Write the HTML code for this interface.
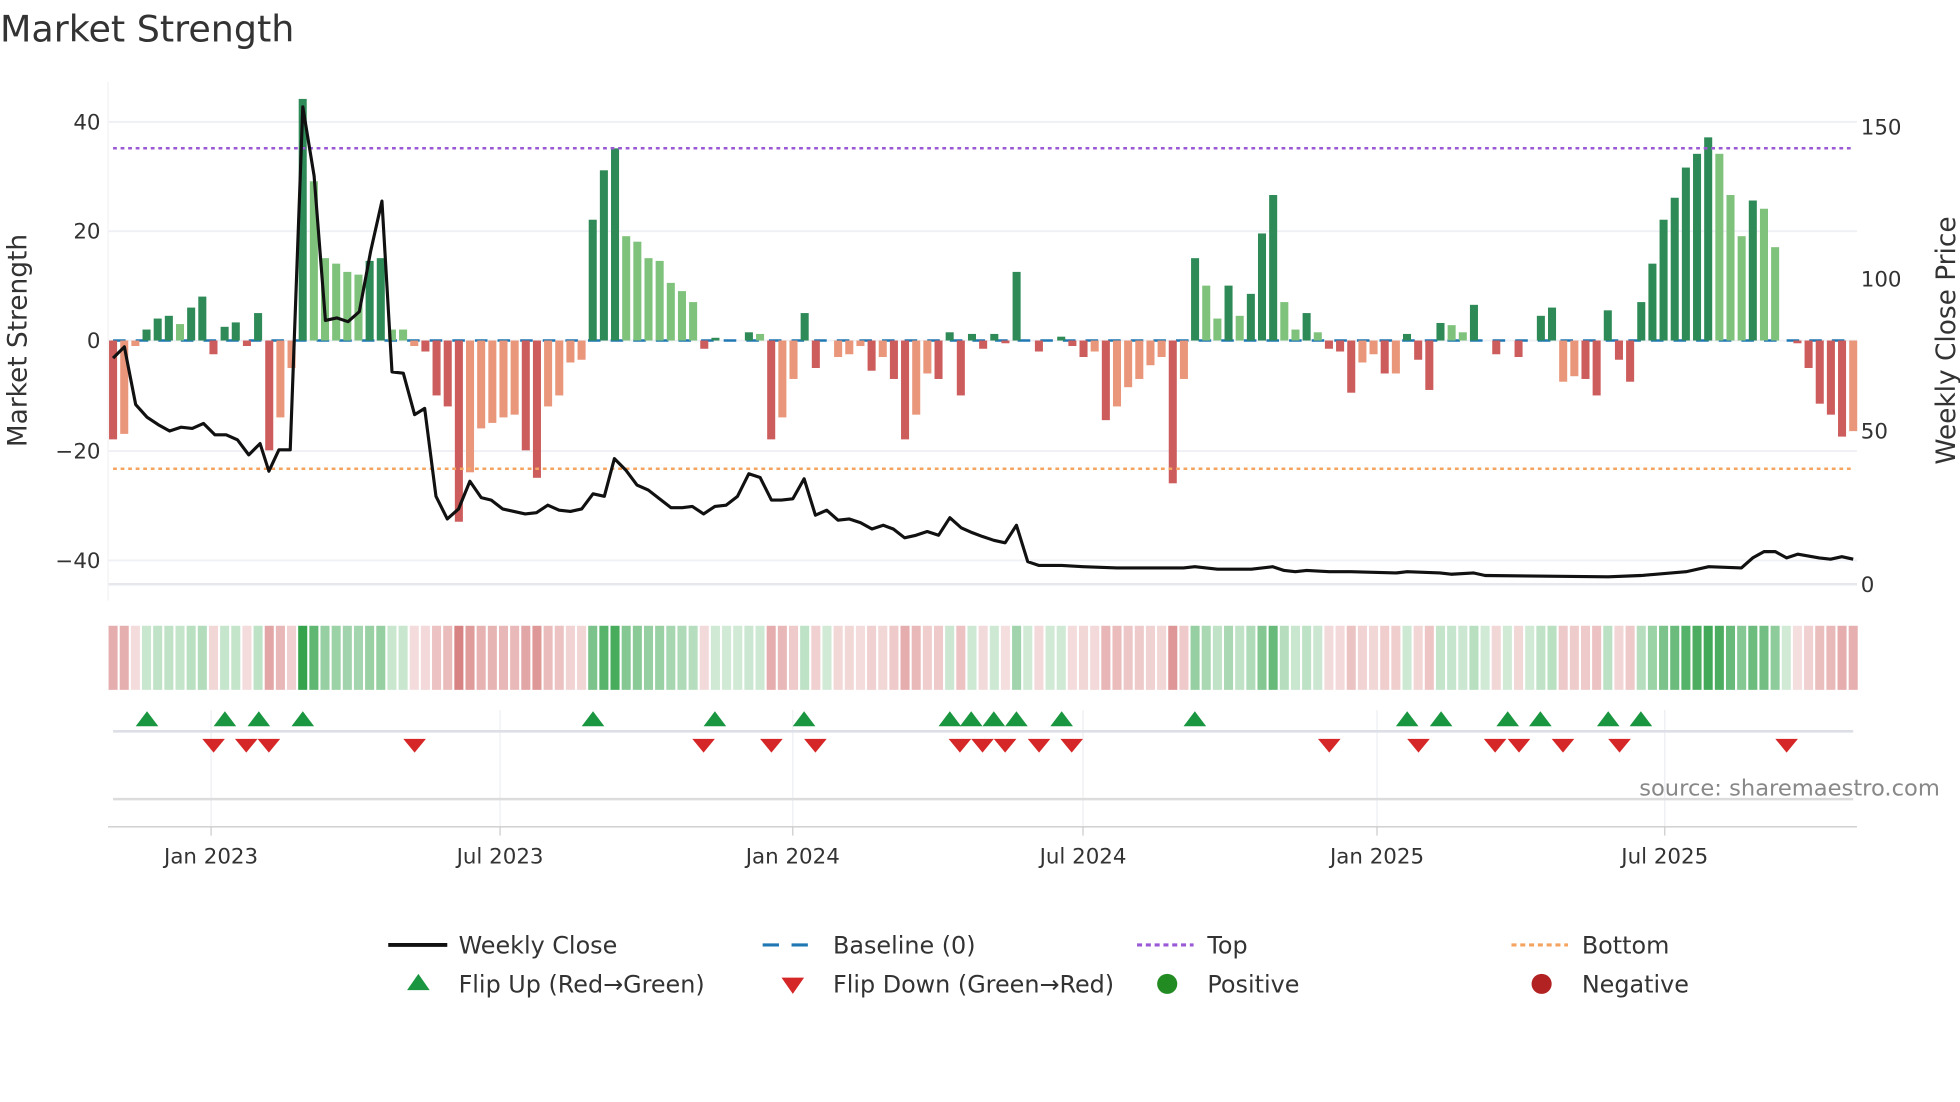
<!DOCTYPE html>
<html><head><meta charset="utf-8">
<style>
html,body{margin:0;padding:0;background:#fff;}
svg{display:block;}
text{font-family:"DejaVu Sans","Liberation Sans",sans-serif;fill:#333;}
</style></head>
<body>
<svg id="s" width="1960" height="1102" viewBox="0 0 1560 877" preserveAspectRatio="none" xmlns="http://www.w3.org/2000/svg">
<rect width="1560" height="877" fill="#fff"/>
<text x="0" y="33" font-size="29">Market Strength</text>
<g id="grid"></g>
<g id="bars"></g>
<g id="lines"></g>
<g id="strip"></g>
<g id="marks"></g>
<g font-size="17" text-anchor="end">
<text x="80" y="103">40</text>
<text x="80" y="190">20</text>
<text x="80" y="277">0</text>
<text x="80" y="365">−20</text>
<text x="80" y="452">−40</text>
</g>
<g font-size="17" text-anchor="start">
<text x="1481" y="107">150</text>
<text x="1481" y="228">100</text>
<text x="1481" y="349">50</text>
<text x="1481" y="471">0</text>
</g>
<text transform="translate(21,271) rotate(-90)" font-size="21" text-anchor="middle">Market Strength</text>
<text transform="translate(1556,271) rotate(-90)" font-size="21" text-anchor="middle">Weekly Close Price</text>
<text x="1544" y="633" font-size="18" text-anchor="end" style="fill:#888">source: sharemaestro.com</text>
<g font-size="17" text-anchor="middle">
<text x="168" y="687">Jan 2023</text>
<text x="398" y="687">Jul 2023</text>
<text x="631" y="687">Jan 2024</text>
<text x="862" y="687">Jul 2024</text>
<text x="1096" y="687">Jan 2025</text>
<text x="1325" y="687">Jul 2025</text>
</g>
<g font-size="19">
<line x1="309" y1="752" x2="356" y2="752" stroke="#111" stroke-width="3"/>
<text x="365" y="759">Weekly Close</text>
<line x1="607" y1="752" x2="652" y2="752" stroke="#1f77b4" stroke-width="2.5" stroke-dasharray="13,10"/>
<text x="663" y="759">Baseline (0)</text>
<line x1="905" y1="752" x2="950" y2="752" stroke="#9b59d6" stroke-width="2.5" stroke-dasharray="4,3"/>
<text x="961" y="759">Top</text>
<line x1="1203" y1="752" x2="1248" y2="752" stroke="#f4a460" stroke-width="2.5" stroke-dasharray="4,3"/>
<text x="1259" y="759">Bottom</text>
<polygon points="324,788 342,788 333,775" fill="#1a9641"/>
<text x="365" y="790">Flip Up (Red→Green)</text>
<polygon points="622,778 640,778 631,791" fill="#d62728"/>
<text x="663" y="790">Flip Down (Green→Red)</text>
<circle cx="929" cy="783" r="8" fill="#228b22"/>
<text x="961" y="790">Positive</text>
<circle cx="1227" cy="783" r="8" fill="#b22222"/>
<text x="1259" y="790">Negative</text>
</g>
</svg>
<script>
var NS="http://www.w3.org/2000/svg";
function el(p,t,a){var e=document.createElementNS(NS,t);for(var k in a)e.setAttribute(k,a[k]);document.getElementById(p).appendChild(e);return e;}
[97,184,271,359,446].forEach(function(y){el("grid","line",{x1:86,x2:1478,y1:y,y2:y,stroke:"#eef0f5","stroke-width":1.5});});
el("grid","line",{x1:86,x2:1478,y1:465,y2:465,stroke:"#e6e8ee","stroke-width":2});
el("grid","line",{x1:86,x2:86,y1:65,y2:478,stroke:"#f2f2f2","stroke-width":1});
[168,398,631,862,1096,1325].forEach(function(x){
 el("grid","line",{x1:x,x2:x,y1:565,y2:658,stroke:"#eceef2","stroke-width":1});
 el("grid","line",{x1:x,x2:x,y1:658,y2:665,stroke:"#ccc","stroke-width":1});
});
el("grid","line",{x1:90,x2:1475,y1:582,y2:582,stroke:"#dcdfe6","stroke-width":2});
el("grid","line",{x1:90,x2:1475,y1:636,y2:636,stroke:"#dcdcdc","stroke-width":2});
el("grid","line",{x1:86,x2:1478,y1:658,y2:658,stroke:"#ccc","stroke-width":1});
el("grid","line",{x1:90,x2:1475,y1:271,y2:271,stroke:"#1f77b4","stroke-width":2,"stroke-dasharray":"10,8"});
var v=[-18,1,-17,0,-1,0,2,1,4,1,4.5,1,3,0,6,1,8,1,-2.5,1,2.5,1,3.3,1,-1,1,5,1,-20,1,-14,0,-5,0,44,1,29,0,15,0,14,0,12.5,0,12,0,14.5,1,15,1,2,0,2,0,-1,0,-2,1,-10,1,-12,1,-33,1,-24,0,-16,0,-15,0,-14,0,-13.5,0,-20,1,-25,1,-12,0,-10,0,-4,0,-3.5,0,22,1,31,1,35,1,19,0,18,0,15,0,14.5,0,10.5,0,9,0,7,0,-1.5,1,0.5,1,0,0,0,0,1.5,1,1.2,0,-18,1,-14,0,-7,0,5,1,-5,1,0,0,-3,0,-2.5,0,-1,0,-5.5,1,-3,0,-7,1,-18,1,-13.5,0,-6,0,-7,1,1.5,1,-10,1,1.2,1,-1.5,1,1.2,1,-0.5,1,12.5,1,0,0,-2,1,0,0,0.7,1,-1,1,-3,1,-2,0,-14.5,1,-12,0,-8.5,0,-7,0,-4.5,0,-3,0,-26,1,-7,0,15,1,10,0,4,0,10,1,4.5,0,8.5,1,19.5,1,26.5,1,7,0,2,0,5,1,1.5,0,-1.5,1,-2,1,-9.5,1,-4,0,-2.5,0,-6,1,-6,0,1.2,1,-3.5,1,-9,1,3.2,1,2.8,0,1.5,0,6.5,1,0,0,-2.5,1,0,0,-3,1,0,0,4.5,1,6,1,-7.5,0,-6.5,0,-7,1,-10,1,5.5,1,-3.5,1,-7.5,1,7,1,14,1,22,1,26,1,31.5,1,34,1,37,1,34,0,26.5,0,19,0,25.5,1,24,0,17,0,0,0,-0.5,1,-5,1,-11.5,1,-13.5,1,-17.5,1,-16.5,0];
var n=v.length/2, step=(1475-90)/(n-1);
for(var i=0;i<n;i++){
 var val=v[2*i], d=v[2*i+1], x=90+i*step, h=Math.abs(val)*4.37;
 var c=val>=0?(d?"#2e8b57":"#7fc27c"):(d?"#cd5c5c":"#e9967a");
 if(h>0.3) el("bars","rect",{x:x-3.2,y:val>=0?271-h:271,width:6.4,height:h,fill:c});
 var a=0.22+0.75*Math.min(Math.abs(val)/40,1);
 var sc=val>=0?"rgba(46,160,70,"+a.toFixed(2)+")":"rgba(200,80,80,"+(a*0.85).toFixed(2)+")";
 el("strip","rect",{x:x-3.6,y:498,width:7.2,height:51,fill:sc});
}
el("lines","line",{x1:90,x2:1475,y1:118,y2:118,stroke:"#9b59d6","stroke-width":2,"stroke-dasharray":"3,3"});
el("lines","line",{x1:90,x2:1475,y1:373,y2:373,stroke:"#f4a460","stroke-width":2,"stroke-dasharray":"3,3"});
var pts="90,285 99,276 108,322 117,332 126,338 135,343 144,340 153,341 162,337 171,346 180,346 189,350 198,362 207,353 214,375 222,358 231,358 241,85 250,140 259,255 268,253 277,256 286,248 295,200 304,160 312,296 321,297 330,330 338,325 347,395 356,413 365,405 374,383 383,396 391,398 400,405 409,407 418,409 427,408 436,402 445,406 454,407 463,405 472,393 481,395 489,365 498,374 507,386 516,390 525,397 534,404 543,404 551,403 560,409 569,403 578,402 587,395 596,377 605,380 614,398 622,398 631,397 640,381 649,410 658,406 667,414 676,413 685,416 694,421 703,418 711,421 720,428 729,426 738,423 747,426 756,412 765,420 774,424 782,427 791,430 800,432 809,418 818,447 827,450 845,450 862,451 889,452 942,452 951,451 969,453 996,453 1013,451 1022,454 1031,455 1040,454 1058,455 1075,455 1111,456 1120,455 1146,456 1155,457 1173,456 1182,458 1280,459 1306,458 1342,455 1360,451 1386,452 1395,444 1404,439 1413,439 1422,444 1431,441 1448,444 1457,445 1466,443 1475,445";
el("lines","polyline",{points:pts,fill:"none",stroke:"#111","stroke-width":2.5,"stroke-linejoin":"round"});
[117,179,206,241,472,569,640,756,773,791,809,845,951,1120,1147,1200,1226,1280,1306].forEach(function(x){
 el("marks","polygon",{points:(x-9)+",578 "+(x+9)+",578 "+x+",566",fill:"#1a9641"});});
[170,196,214,330,560,614,649,764,782,800,827,853,1058,1129,1190,1209,1244,1289,1422].forEach(function(x){
 el("marks","polygon",{points:(x-9)+",588 "+(x+9)+",588 "+x+",599",fill:"#d62728"});});
</script>
</body></html>
